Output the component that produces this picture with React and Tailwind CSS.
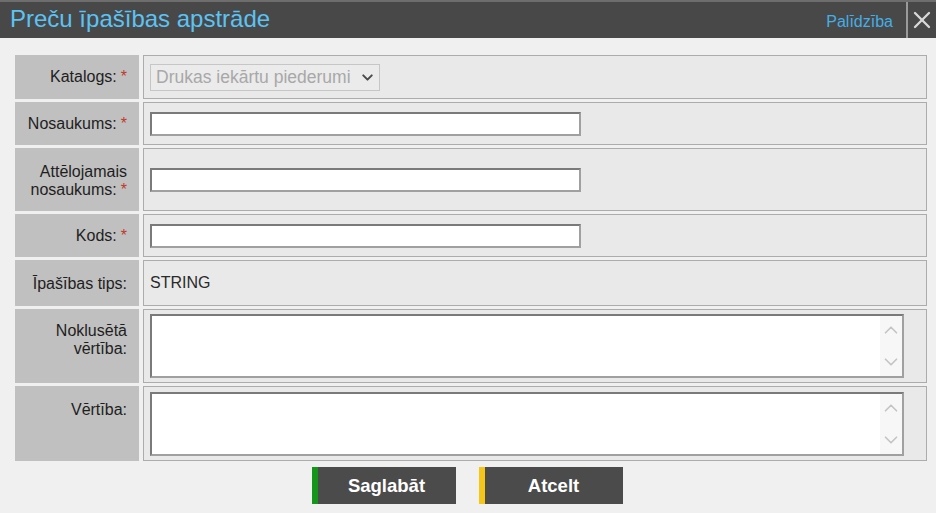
import { X, ChevronDown, ChevronUp } from "lucide-react";

const Req = () => <span className="text-[#c0392b] ml-[4px]">*</span>;

function Label({ children }) {
  return (
    <div className="w-[124px] shrink-0 bg-[#c0c0c0] text-right pr-[12px] pt-[13px] text-[16px] leading-[18px] text-[#1e1e1e]">
      {children}
    </div>
  );
}

function Value({ children, className = "" }) {
  return (
    <div className={`flex-1 bg-[#e9e9e9] border border-[#acacac] flex items-center px-[6px] ${className}`}>
      {children}
    </div>
  );
}

function TextInput() {
  return (
    <input
      type="text"
      className="w-[431px] h-[24px] bg-white border-2 border-t-[#7a7a7a] border-l-[#7a7a7a] border-r-[#a0a0a0] border-b-[#a0a0a0] outline-none"
    />
  );
}

function Area() {
  return (
    <div className="w-[754px] h-[64px] bg-white border-2 border-t-[#7a7a7a] border-l-[#7a7a7a] border-r-[#a0a0a0] border-b-[#a0a0a0] flex">
      <textarea className="flex-1 resize-none outline-none bg-white" />
      <div className="w-[22px] bg-[#f7f7f7] flex flex-col items-center justify-between py-[3px] text-[#c4c4c4]">
        <ChevronUp size={22} strokeWidth={1.8} />
        <ChevronDown size={22} strokeWidth={1.8} />
      </div>
    </div>
  );
}

export default function App() {
  return (
    <div className="w-[936px] h-[513px] bg-[#f0f0f0] font-['Liberation_Sans',Arial,sans-serif] flex flex-col overflow-hidden">

      {/* HEADER */}
      <div className="h-[38px] bg-[#484848] border-t-2 border-[#6e6e6e] flex items-center shrink-0">
        <div className="flex-1 pl-[10px] text-[24px] text-[#5cc3f3] leading-none pb-[2px]">
          Preču īpašības apstrāde
        </div>
        <div className="text-[16px] text-[#45aee6] pr-[13px] pt-[3px]">Palīdzība</div>
        <div className="w-[30px] h-full border-l-2 border-[#9a9a9a] flex items-center justify-center text-[#d8d8d8]">
          <X size={28} strokeWidth={2} />
        </div>
      </div>

      {/* FORM */}
      <div className="mt-[17px] mx-[9px] ml-[15px] flex flex-col gap-[3px]">

        <div className="flex gap-[4px] h-[44px]">
          <Label>Katalogs:<Req /></Label>
          <Value>
            <div className="w-[230px] h-[27px] bg-[#ebebeb] border border-[#c6c6c6] flex items-center justify-between pl-[5px] pr-[3px] text-[17.5px] text-[#a8a8a8] overflow-hidden">
              <span className="whitespace-nowrap">Drukas iekārtu piederumi</span>
              <ChevronDown size={17} strokeWidth={2.8} className="text-[#4a4a4a] shrink-0" />
            </div>
          </Value>
        </div>

        <div className="flex gap-[4px] h-[43px]">
          <Label>Nosaukums:<Req /></Label>
          <Value><TextInput /></Value>
        </div>

        <div className="flex gap-[4px] h-[63px]">
          <Label>
            <span className="block pt-[2px]">Attēlojamais</span>
            <span className="block whitespace-nowrap">nosaukums:<Req /></span>
          </Label>
          <Value><TextInput /></Value>
        </div>

        <div className="flex gap-[4px] h-[43px]">
          <Label>Kods:<Req /></Label>
          <Value><TextInput /></Value>
        </div>

        <div className="flex gap-[4px] h-[46px]">
          <Label><span className="block pt-[2px]">Īpašības tips:</span></Label>
          <Value className="text-[16px] text-[#2a2a2a]">STRING</Value>
        </div>

        <div className="flex gap-[4px] h-[74px]">
          <Label>
            <span className="block">Noklusētā</span>
            <span className="block">vērtība:</span>
          </Label>
          <Value><Area /></Value>
        </div>

        <div className="flex gap-[4px] h-[75px]">
          <Label><span className="block pt-[2px]">Vērtība:</span></Label>
          <Value><Area /></Value>
        </div>

      </div>

      {/* BUTTONS */}
      <div className="flex justify-center gap-[23px] mt-[6px] pr-[2px]">
        <button className="w-[144px] h-[37px] bg-[#4b4b4b] border-l-[6px] border-[#14961a] text-white font-bold text-[18.5px]">
          Saglabāt
        </button>
        <button className="w-[144px] h-[37px] bg-[#4b4b4b] border-l-[6px] border-[#f5c518] text-white font-bold text-[18.5px]">
          Atcelt
        </button>
      </div>

    </div>
  );
}
